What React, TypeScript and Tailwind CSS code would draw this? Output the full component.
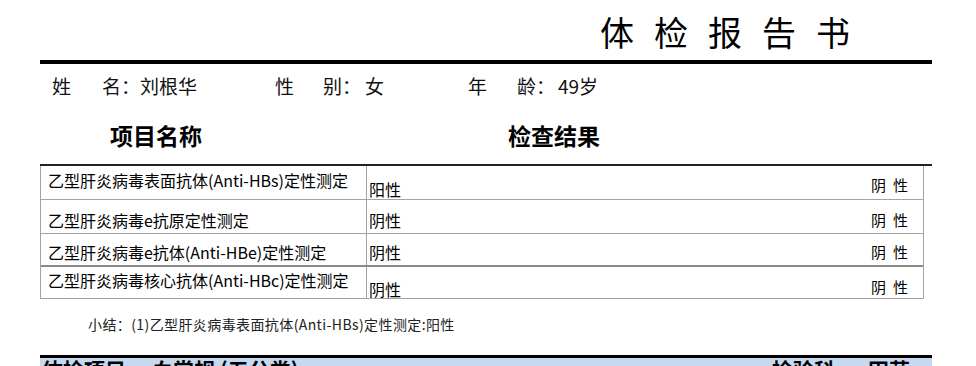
const ROWS = [
  {
    name: "乙型肝炎病毒表面抗体(Anti-HBs)定性测定",
    result: "阳性",
    ref: "阴性",
    h: "h-[34px] border-b",
    pt: ["pt-[6px]", "pt-[15px]", "pt-[11px]"],
  },
  {
    name: "乙型肝炎病毒e抗原定性测定",
    result: "阴性",
    ref: "阴性",
    h: "h-[34px] border-b",
    pt: ["pt-[12px]", "pt-[12px]", "pt-[12px]"],
  },
  {
    name: "乙型肝炎病毒e抗体(Anti-HBe)定性测定",
    result: "阴性",
    ref: "阴性",
    h: "h-[33px] border-b-2 border-b-[#8a8a8a]",
    pt: ["pt-[10px]", "pt-[10px]", "pt-[10px]"],
  },
  {
    name: "乙型肝炎病毒核心抗体(Anti-HBc)定性测定",
    result: "阴性",
    ref: "阴性",
    h: "h-[32px] border-b",
    pt: ["pt-[5px]", "pt-[14px]", "pt-[12px]"],
  },
];

function Field({ a, b, value, gap, vgap, w }: { a: string; b: string; value: string; gap: string; vgap: string; w: string }) {
  return (
    <div className={`flex ${w}`}>
      <span className={gap}>{a}</span>
      <span>{b}</span>
      <span className="w-[19px] text-center">：</span>
      <span className={vgap}>{value}</span>
    </div>
  );
}

export default function App() {
  return (
    <div className="h-[366px] overflow-hidden bg-white font-['Noto_Sans_CJK_SC',sans-serif] text-black">
      <div className="ml-[40px] w-[892px]">
        {/* title */}
        <div className="pt-[15px] pl-[560px] text-[34px] leading-none font-normal tracking-[20px] whitespace-nowrap">
          体检报告书
        </div>
        <div className="mt-[11px] h-[4px] bg-black" />

        {/* patient info */}
        <div className="mt-[12px] flex pl-[12px] text-[19px] leading-none text-[#111]">
          <Field a="姓" b="名" value="刘根华" gap="w-[50px]" vgap="ml-0" w="w-[223px]" />
          <Field a="性" b="别" value="女" gap="w-[48px]" vgap="ml-[4px]" w="w-[193px]" />
          <Field a="年" b="龄" value="49岁" gap="w-[49px]" vgap="ml-[3px]" w="w-[200px]" />
        </div>

        {/* headers */}
        <div className="mt-[29px] flex pl-[70px] text-[23px] leading-none font-bold">
          <span className="w-[398px]">项目名称</span>
          <span>检查结果</span>
        </div>

        {/* table */}
        <div className="mt-[17px] border-t-2 border-[#222]">
          <div className="w-[884px] border-x border-[#a3a3a3]">
            {ROWS.map((r) => (
              <div key={r.name} className={`grid grid-cols-[326px_1fr] border-[#a3a3a3] ${r.h}`}>
                <div className={`border-r border-[#a3a3a3] pl-[7px] text-[16px] leading-none whitespace-nowrap ${r.pt[0]}`}>
                  {r.name}
                </div>
                <div className="flex justify-between">
                  <span className={`pl-[2px] text-[16px] leading-none ${r.pt[1]}`}>{r.result}</span>
                  <span className={`pr-[8px] text-[15px] leading-none tracking-[7px] ${r.pt[2]}`}>{r.ref}</span>
                </div>
              </div>
            ))}
          </div>
        </div>

        {/* summary */}
        <div className="mt-[18px] pl-[48px] text-[14px] leading-none tracking-[0.4px] text-[#222]">
          小结：(1)乙型肝炎病毒表面抗体(Anti-HBs)定性测定:阳性
        </div>

        {/* next section, cut off by the window */}
        <div className="mt-[24px] h-[3px] bg-black" />
        <div className="flex h-[40px] bg-[#c6d9f0] pt-[1px] text-[21px] leading-none font-bold">
          <span className="w-[112px] pl-[2px]">体检项目</span>
          <span className="w-[620px]">血常规 (五分类)</span>
          <span className="w-[96px]">检验科</span>
          <span>田芬</span>
        </div>
      </div>
    </div>
  );
}
